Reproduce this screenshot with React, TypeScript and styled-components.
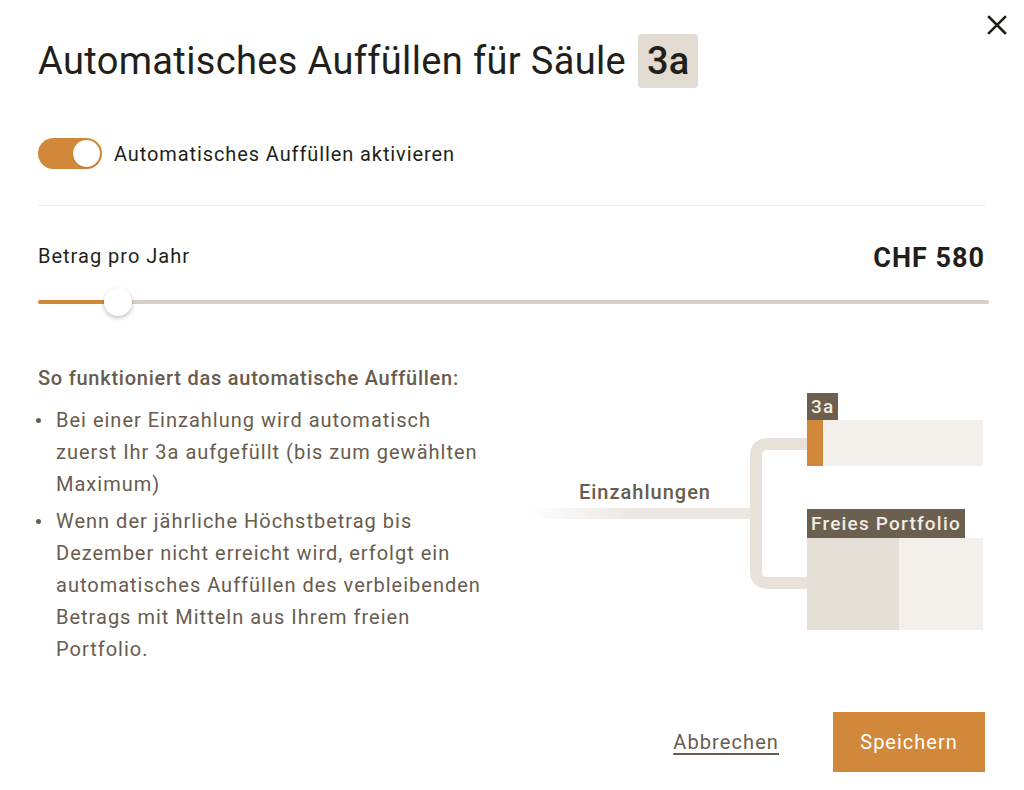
import React, { useState } from 'react';
import styled, { createGlobalStyle } from 'styled-components';

const orange = '#d2883a';
const ink = '#221f1b';
const brown = '#685c4e';
const sand = '#e2dbd1';
const paleSand = '#f3f0eb';

const GlobalStyle = createGlobalStyle`
    html, body {
        margin: 0;
        background: #ffffff;
        font-family: Roboto, "DejaVu Sans", sans-serif;
        color: ${ink};
    }
`;

const Styles = {
    Dialog: styled.div`
        position: relative;
        width: 1024px;
        height: 790px;
        box-sizing: border-box;
        padding: 34px 39px 0 38px;
        display: flex;
        flex-direction: column;
        background: #fff;
    `,

    Close: styled.button`
        position: absolute;
        top: 14px;
        right: 16px;
        width: 22px;
        height: 22px;
        padding: 0;
        border: none;
        background: transparent;
        cursor: pointer;
        display: flex;
        align-items: center;
        justify-content: center;
    `,

    Title: styled.h1`
        margin: 0;
        height: 54px;
        display: flex;
        align-items: center;
        gap: 12px;
        font-size: 38px;
        font-weight: 400;
        letter-spacing: 0.35px;
        color: ${ink};
    `,

    Badge: styled.span`
        display: inline-flex;
        align-items: center;
        justify-content: center;
        width: 60px;
        height: 54px;
        border-radius: 4px;
        background: ${sand};
        font-weight: 500;
        letter-spacing: 0;
    `,

    ToggleRow: styled.label`
        margin-top: 50px;
        display: flex;
        align-items: center;
        gap: 12px;
        font-size: 20px;
        letter-spacing: 0.9px;
        color: ${ink};
        cursor: pointer;
    `,

    Track: styled.span<{ $on: boolean }>`
        width: 64px;
        height: 31px;
        border-radius: 16px;
        background: ${(p) => (p.$on ? orange : '#cfc8bf')};
        display: flex;
        align-items: center;
        justify-content: ${(p) => (p.$on ? 'flex-end' : 'flex-start')};
        padding: 0 2px;
        box-sizing: border-box;
    `,

    Knob: styled.span`
        width: 27px;
        height: 27px;
        border-radius: 50%;
        background: #fff;
        box-shadow: 0 1px 2px rgba(0, 0, 0, 0.15);
    `,

    Divider: styled.hr`
        margin: 36px 0 0;
        border: none;
        height: 1px;
        background: #ecebe9;
    `,

    AmountRow: styled.div`
        margin-top: 34px;
        height: 32px;
        display: flex;
        justify-content: space-between;
        align-items: center;
    `,

    AmountLabel: styled.span`
        font-size: 20px;
        letter-spacing: 1px;
        color: ${ink};
    `,

    AmountValue: styled.span`
        font-size: 27px;
        font-weight: 700;
        letter-spacing: 1px;
        color: ${ink};
        margin-top: 4px;
    `,

    Slider: styled.div`
        margin-top: 16px;
        position: relative;
        height: 28px;
        display: flex;
        align-items: center;
        margin-right: -4px;
    `,

    Rail: styled.div`
        flex: 1;
        height: 4px;
        border-radius: 2px;
        background: #d8d0c7;
        position: relative;
    `,

    Fill: styled.div`
        height: 100%;
        border-radius: 2px;
        background: ${orange};
    `,

    Thumb: styled.div`
        position: absolute;
        top: 0;
        width: 28px;
        height: 28px;
        margin-left: -16px;
        border-radius: 50%;
        background: #fff;
        box-shadow: 0 2px 4px rgba(0, 0, 0, 0.25);
    `,

    Info: styled.div`
        margin-top: 50px;
        display: flex;
        align-items: flex-start;
        justify-content: space-between;
    `,

    Text: styled.div`
        width: 446px;
        color: ${brown};
    `,

    Heading: styled.h3`
        margin: 0;
        font-size: 20px;
        line-height: 24px;
        font-weight: 500;
        letter-spacing: 0.75px;
        white-space: nowrap;
    `,

    List: styled.ul`
        margin: 14px 0 0;
        padding: 0;
        list-style: none;
        display: flex;
        flex-direction: column;
        gap: 5px;
    `,

    Item: styled.li`
        position: relative;
        padding-left: 18px;
        font-size: 20px;
        line-height: 32px;
        letter-spacing: 1px;

        &::before {
            content: '';
            position: absolute;
            left: -2px;
            top: 14px;
            width: 5px;
            height: 5px;
            border-radius: 50%;
            background: ${brown};
        }
    `,

    Diagram: styled.div`
        margin-top: 27px;
        margin-right: 2px;
        display: flex;
        align-items: flex-start;
    `,

    Flow: styled.div`
        position: relative;
        width: 287px;
        height: 237px;
        display: flex;
        flex-direction: column;
        align-items: flex-end;
        padding: 87px 96px 0 0;
        box-sizing: border-box;
    `,

    FlowLines: styled.svg`
        position: absolute;
        inset: 0;
    `,

    FlowLabel: styled.span`
        position: relative;
        font-size: 20px;
        line-height: 24px;
        font-weight: 500;
        letter-spacing: 1px;
        color: ${brown};
    `,

    Targets: styled.div`
        width: 176px;
        display: flex;
        flex-direction: column;
    `,

    Tag: styled.span<{ $gap?: number }>`
        align-self: flex-start;
        margin-top: ${(p) => p.$gap ?? 0}px;
        padding: 0 4px;
        height: ${(p) => (p.$gap ? 29 : 27)}px;
        display: flex;
        align-items: center;
        background: #6b5f4f;
        color: #f3ece4;
        font-size: 19px;
        font-weight: 500;
        letter-spacing: 1.2px;
    `,

    Bar: styled.div<{ $height: number }>`
        height: ${(p) => p.$height}px;
        display: flex;
        background: ${paleSand};
    `,

    Segment: styled.div<{ $tone: string }>`
        height: 100%;
        background: ${(p) => p.$tone};
    `,

    Footer: styled.div`
        margin-top: auto;
        margin-bottom: 18px;
        display: flex;
        justify-content: flex-end;
        align-items: center;
        gap: 54px;
    `,

    Cancel: styled.button`
        border: none;
        background: none;
        padding: 0;
        font-family: inherit;
        font-size: 20px;
        letter-spacing: 1.1px;
        color: ${brown};
        text-decoration: underline;
        text-underline-offset: 4px;
        text-decoration-thickness: 1.5px;
        cursor: pointer;
    `,

    Save: styled.button`
        width: 152px;
        height: 60px;
        border: none;
        background: ${orange};
        color: #fff;
        font-family: inherit;
        font-size: 20px;
        letter-spacing: 1px;
        cursor: pointer;
    `,
};

const CloseIcon = () => (
    <svg width="20" height="20" viewBox="0 0 20 20">
        <path d="M2 2 L18 18 M18 2 L2 18" stroke={ink} strokeWidth="2.6" strokeLinecap="square" />
    </svg>
);

export default function App() {
    const [enabled, setEnabled] = useState(true);
    const progress = 7.1;

    return (
        <>
            <GlobalStyle />
            <Styles.Dialog>
                <Styles.Close aria-label="Schliessen">
                    <CloseIcon />
                </Styles.Close>

                <Styles.Title>
                    Automatisches Auffüllen für Säule <Styles.Badge>3a</Styles.Badge>
                </Styles.Title>

                <Styles.ToggleRow onClick={() => setEnabled(!enabled)}>
                    <Styles.Track $on={enabled}>
                        <Styles.Knob />
                    </Styles.Track>
                    Automatisches Auffüllen aktivieren
                </Styles.ToggleRow>

                <Styles.Divider />

                <Styles.AmountRow>
                    <Styles.AmountLabel>Betrag pro Jahr</Styles.AmountLabel>
                    <Styles.AmountValue>CHF 580</Styles.AmountValue>
                </Styles.AmountRow>

                <Styles.Slider>
                    <Styles.Rail>
                        <Styles.Fill style={{ width: `${progress}%` }} />
                    </Styles.Rail>
                    <Styles.Thumb style={{ left: `calc(${progress}% + 14px)` }} />
                </Styles.Slider>

                <Styles.Info>
                    <Styles.Text>
                        <Styles.Heading>So funktioniert das automatische Auffüllen:</Styles.Heading>
                        <Styles.List>
                            <Styles.Item>
                                Bei einer Einzahlung wird automatisch zuerst Ihr 3a aufgefüllt (bis zum gewählten Maximum)
                            </Styles.Item>
                            <Styles.Item>
                                Wenn der jährliche Höchstbetrag bis Dezember nicht erreicht wird, erfolgt ein
                                automatisches Auffüllen des verbleibenden Betrags mit Mitteln aus Ihrem freien Portfolio.
                            </Styles.Item>
                        </Styles.List>
                    </Styles.Text>

                    <Styles.Diagram>
                        <Styles.Flow>
                            <Styles.FlowLines width="287" height="237" viewBox="0 0 287 237">
                                <defs>
                                    <linearGradient id="lead" x1="0" x2="1" y1="0" y2="0">
                                        <stop offset="0" stopColor="#ece7e1" stopOpacity="0" />
                                        <stop offset="0.45" stopColor="#ece7e1" stopOpacity="1" />
                                    </linearGradient>
                                </defs>
                                <rect x="8" y="115" width="232" height="11" fill="url(#lead)" />
                                <path
                                    d="M287 51 H248 Q236 51 236 63 V178 Q236 190 248 190 H287"
                                    fill="none"
                                    stroke="#e8e2db"
                                    strokeWidth="12"
                                />
                            </Styles.FlowLines>
                            <Styles.FlowLabel>Einzahlungen</Styles.FlowLabel>
                        </Styles.Flow>

                        <Styles.Targets>
                            <Styles.Tag>3a</Styles.Tag>
                            <Styles.Bar $height={46}>
                                <Styles.Segment $tone={orange} style={{ width: 16 }} />
                            </Styles.Bar>
                            <Styles.Tag $gap={43}>Freies Portfolio</Styles.Tag>
                            <Styles.Bar $height={92}>
                                <Styles.Segment $tone="#e5dfd8" style={{ width: 92 }} />
                            </Styles.Bar>
                        </Styles.Targets>
                    </Styles.Diagram>
                </Styles.Info>

                <Styles.Footer>
                    <Styles.Cancel>Abbrechen</Styles.Cancel>
                    <Styles.Save>Speichern</Styles.Save>
                </Styles.Footer>
            </Styles.Dialog>
        </>
    );
}
